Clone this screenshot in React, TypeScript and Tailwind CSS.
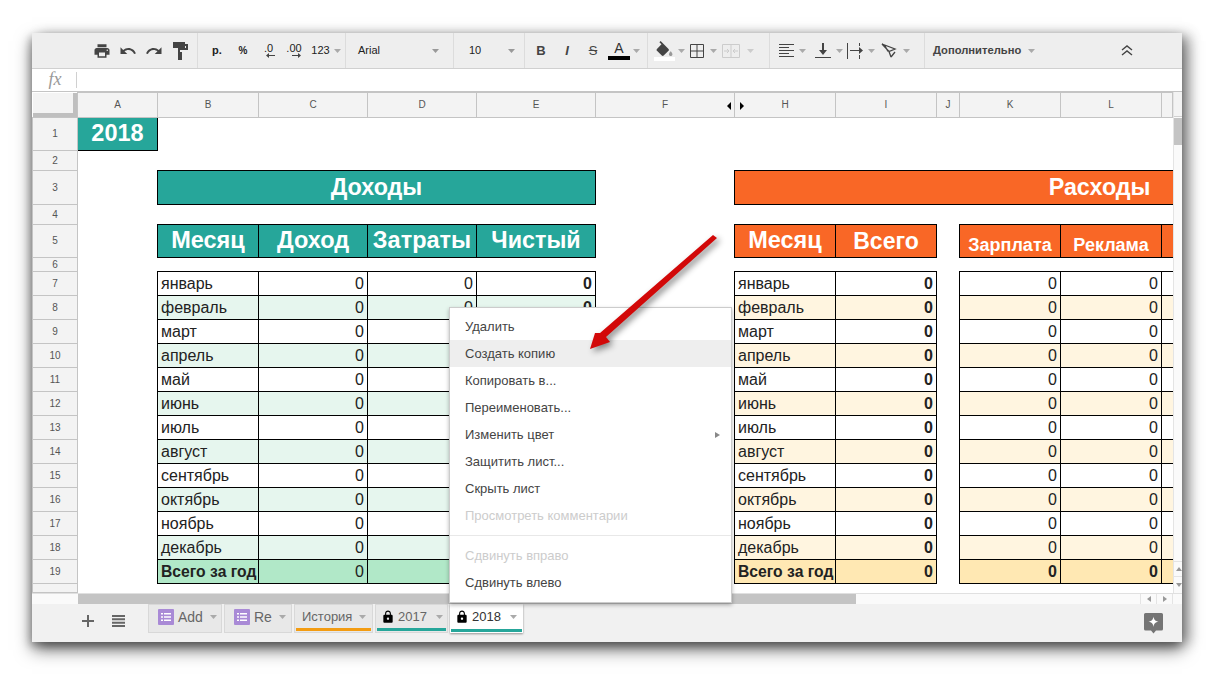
import React from "react";

const months = ["январь","февраль","март","апрель","май","июнь","июль","август","сентябрь","октябрь","ноябрь","декабрь"];
const colLetters = ["A","B","C","D","E","F","H","I","J","K","L",""];

function Caret({ className = "fill-[#888]" }: { className?: string }) {
  return (
    <svg width="7" height="4" viewBox="0 0 7 4" className={className}>
      <path d="M0 0h7L3.5 4z" />
    </svg>
  );
}

function Slot({ children, className = "w-[26px]" }: { children: React.ReactNode; className?: string }) {
  return <div className={`flex items-center justify-center shrink-0 ${className}`}>{children}</div>;
}

function Icon({ d, size = 16, className = "fill-[#444]" }: { d: string; size?: number; className?: string }) {
  return (
    <svg width={size} height={size} viewBox="0 0 24 24" className={className}>
      <path d={d} />
    </svg>
  );
}

function Toolbar() {
  const group = "flex items-center h-full border-r border-[#dcdcdc] shrink-0";
  return (
    <div className="h-[36px] shrink-0 flex items-center bg-[#eeeeee] border-b border-[#d0d0d0] text-[#333] text-[11px]">
      <div className={`${group} w-[166px] pl-[57px]`}>
        <Slot><Icon size={18} d="M19 8H5c-1.66 0-3 1.34-3 3v6h4v4h12v-4h4v-6c0-1.66-1.34-3-3-3zm-3 11H8v-5h8v5zm3-7c-.55 0-1-.45-1-1s.45-1 1-1 1 .45 1 1-.45 1-1 1zm-1-9H6v4h12V3z" /></Slot>
        <Slot><Icon size={18} d="M12.5 8c-2.65 0-5.05.99-6.9 2.6L2 7v9h9l-3.62-3.62c1.39-1.16 3.16-1.88 5.12-1.88 3.54 0 6.55 2.31 7.6 5.5l2.37-.78C21.08 11.03 17.15 8 12.5 8z" /></Slot>
        <Slot><Icon size={18} d="M18.4 10.6C16.55 8.99 14.15 8 11.5 8c-4.65 0-8.58 3.03-9.96 7.22L3.9 16c1.05-3.19 4.05-5.5 7.6-5.5 1.95 0 3.73.72 5.12 1.88L13 16h9V7l-3.6 3.6z" /></Slot>
        <Slot>
          <svg width="15" height="18" viewBox="0 0 15 18" className="fill-[#444]">
            <path d="M0 0h12v2h3v6H7v2h2v8H5v-8V6h8V4h-1v2H0z" />
          </svg>
        </Slot>
      </div>
      <div className={`${group} w-[148px] pl-[6px] text-[#222] text-[11px]`}>
        <Slot className="w-[26px]"><span className="font-bold">р.</span></Slot>
        <Slot className="w-[26px]"><span className="font-bold text-[10px]">%</span></Slot>
        <Slot className="w-[25px]">
          <div className="flex flex-col items-center">
            <span className="leading-[9px]">.0</span>
            <svg width="9" height="5" viewBox="0 0 9 5" className="ml-[4px] fill-[#444]"><path d="M9 2H3V0L0 2.500 3 5V3h6z" /></svg>
          </div>
        </Slot>
        <Slot className="w-[26px]">
          <div className="flex flex-col items-center">
            <span className="leading-[9px]">.00</span>
            <svg width="9" height="5" viewBox="0 0 9 5" className="ml-[6px] fill-[#444]"><path d="M0 2h6V0l3 2.500L6 5V3H0z" /></svg>
          </div>
        </Slot>
        <Slot className="w-[27px]"><span>123</span></Slot>
        <Caret className="fill-[#aaa]" />
      </div>
      <div className={`${group} w-[108px] pl-[12px] pr-[14px] justify-between`}>
        <span className="text-[#222] text-[11px]">Arial</span>
        <Caret className="fill-[#999]" />
      </div>
      <div className={`${group} w-[71px] pl-[15px] pr-[9px] justify-between`}>
        <span className="text-[#222] text-[11px]">10</span>
        <Caret className="fill-[#999]" />
      </div>
      <div className={`${group} w-[123px] pl-[3px]`}>
        <Slot><span className="font-bold text-[13px] text-[#444]">B</span></Slot>
        <Slot><span className="font-bold italic text-[13px] text-[#444]">I</span></Slot>
        <Slot><span className="line-through text-[13px] text-[#444]">S</span></Slot>
        <Slot>
          <div className="flex flex-col items-center w-[22px]">
            <span className="text-[14px] leading-[14px] text-[#333]">A</span>
            <div className="w-[22px] h-[4px] bg-black mt-[1px]" />
          </div>
        </Slot>
        <div className="ml-[1px]"><Caret className="fill-[#aaa]" /></div>
      </div>
      <div className={`${group} w-[122px] pl-[5px]`}>
        <div className="flex flex-col items-center w-[22px]">
          <svg width="19" height="15" viewBox="2 0 20 17" className="fill-[#444]">
            <path d="M16.56 8.94L7.62 0 6.210 1.410l2.380 2.380-5.150 5.150c-.59.59-.59 1.540 0 2.120l5.500 5.500c.29.29.68.44 1.060.44s.77-.15 1.060-.44l5.500-5.500c.59-.58.59-1.530 0-2.120z" />
            <path d="M19 11.500s-2 2.170-2 3.500c0 1.100.9 2 2 2s2-.9 2-2c0-1.330-2-3.500-2-3.500z" className="fill-[#999]" />
          </svg>
          <div className="w-[21px] h-[4px] bg-white mt-[1px]" />
        </div>
        <div className="ml-[3px]"><Caret className="fill-[#aaa]" /></div>
        <div className="ml-[5px]">
          <svg width="14" height="14" viewBox="0 0 14 14" fill="none" className="stroke-[#444]">
            <path d="M.5.5h13v13H.5zM7 .5v13M.5 7h13" />
          </svg>
        </div>
        <div className="ml-[6px]"><Caret className="fill-[#aaa]" /></div>
        <div className="ml-[5px]">
          <svg width="18" height="14" viewBox="0 0 18 14" fill="none" className="stroke-[#ccc]">
            <path d="M.5.5h17v13H.5zM9 .5v13M2 7h5M5 5l2 2-2 2M16 7h-5M13 5l-2 2 2 2" />
          </svg>
        </div>
        <div className="ml-[7px]"><Caret className="fill-[#ccc]" /></div>
      </div>
      <div className={`${group} w-[155px] pl-[9px]`}>
        <svg width="15" height="13" viewBox="0 0 15 13" className="fill-[#444]">
          <path d="M0 0h15v1H0zM0 3h10v1H0zM0 6h15v1H0zM0 9h10v1H0zM0 12h15v1H0z" />
        </svg>
        <div className="ml-[5px]"><Caret className="fill-[#aaa]" /></div>
        <div className="ml-[9px]">
          <svg width="16" height="15" viewBox="0 0 16 15" className="fill-[#444]">
            <path d="M7 0h2v7h3l-4 5-4-5h3zM0 14h16v1H0z" />
          </svg>
        </div>
        <div className="ml-[5px]"><Caret className="fill-[#aaa]" /></div>
        <div className="ml-[4px]">
          <svg width="18" height="16" viewBox="0 0 18 16" className="fill-[#444]">
            <path d="M0 0h1v16H0zM3 7h9V4l4 3.500-4 3.500V8H3zM12 0h1v3h-1zM12 12h1v4h-1z" />
          </svg>
        </div>
        <div className="ml-[3px]"><Caret className="fill-[#aaa]" /></div>
        <div className="ml-[6px]">
          <svg width="16" height="15" viewBox="0 0 16 15" fill="none" className="stroke-[#444]" strokeWidth="1.3">
            <path d="M1 1l13 5-6 2.500zM3.500 2L7 8.500M8 8.500L10 14M10 14l4-5" />
          </svg>
        </div>
        <div className="ml-[6px]"><Caret className="fill-[#aaa]" /></div>
      </div>
      <div className="flex items-center h-full flex-1 pl-[8px]">
        <span className="font-bold text-[#444] text-[11.2px]">Дополнительно</span>
        <div className="ml-[7px]"><Caret className="fill-[#aaa]" /></div>
        <div className="ml-[86px]">
          <svg width="12" height="11" viewBox="0 0 12 11" fill="none" className="stroke-[#444]" strokeWidth="1.4">
            <path d="M1 5l5-4 5 4M1 10l5-4 5 4" />
          </svg>
        </div>
      </div>
    </div>
  );
}

function FormulaBar() {
  return (
    <div className="h-[23px] shrink-0 flex items-center bg-white border-b border-[#c4c4c4]">
      <div className="w-[45px] h-[16px] flex items-center justify-center border-r border-[#d0d0d0] [font-family:Liberation_Serif,serif] italic text-[18px] text-[#999] leading-none">
        <span className="pl-[2px] -mt-[2px]">fx</span>
      </div>
    </div>
  );
}

const rowHead = "border border-[#c4c4c4] bg-[#f3f3f3] text-[10px] text-[#555] text-center font-normal p-0 leading-none";
const colHead = "border border-[#c4c4c4] bg-[#f3f3f3] text-[10px] text-[#555] text-center font-normal p-0 leading-none";
const teal = "border border-black bg-[#26a69a] text-white font-bold text-center p-0 leading-none";
const orange = "border border-black bg-[#f96726] text-white font-bold text-center p-0 leading-none";
const cell = "border border-black p-0 text-[16px] text-[#222] leading-none";

function Sheet() {
  return (
    <table className="table-fixed border-collapse w-[1140px] shrink-0">
      <colgroup>
        <col className="w-[45px]" /><col className="w-[80px]" /><col className="w-[101px]" /><col className="w-[109px]" />
        <col className="w-[109px]" /><col className="w-[119px]" /><col className="w-[139px]" /><col className="w-[101px]" />
        <col className="w-[101px]" /><col className="w-[23px]" /><col className="w-[101px]" /><col className="w-[101px]" />
        <col className="w-[11px]" />
      </colgroup>
      <thead>
        <tr className="h-[25px]">
          <th className="p-0 bg-[#f3f3f3]">
            <div className="h-[24px] w-full border-r-4 border-b-4 border-[#bfbfbf]" />
          </th>
          {colLetters.map((l, i) => (
            <th key={i} className={`${colHead} ${l === "F" || l === "H" ? "relative" : ""}`}>
              {l}
              {l === "F" && <span className="absolute right-[3px] top-[9px] w-0 h-0 border-y-[4px] border-y-transparent border-r-[4px] border-r-black" />}
              {l === "H" && <span className="absolute left-[5px] top-[9px] w-0 h-0 border-y-[4px] border-y-transparent border-l-[4px] border-l-black" />}
            </th>
          ))}
        </tr>
      </thead>
      <tbody>
        <tr className="h-[33px]">
          <td className={rowHead}>1</td>
          <td className="border-r border-b border-black bg-[#26a69a] text-white font-bold text-[23.5px] text-center p-0 leading-none">2018</td>
        </tr>
        <tr className="h-[20px]"><td className={rowHead}>2</td></tr>
        <tr className="h-[34px]">
          <td className={rowHead}>3</td>
          <td />
          <td colSpan={4} className={`${teal} text-[23.3px]`}>Доходы</td>
          <td />
          <td colSpan={6} className={`${orange} border-r-0 text-[23.3px] !text-right pr-[22px]`}>Расходы</td>
        </tr>
        <tr className="h-[20px]"><td className={rowHead}>4</td></tr>
        <tr className="h-[33px]">
          <td className={rowHead}>5</td>
          <td />
          <td className={`${teal} text-[23.5px]`}>Месяц</td>
          <td className={`${teal} text-[23.5px]`}>Доход</td>
          <td className={`${teal} text-[23.5px]`}>Затраты</td>
          <td className={`${teal} text-[23.3px]`}>Чистый</td>
          <td />
          <td className={`${orange} text-[23.5px]`}>Месяц</td>
          <td className={`${orange} text-[23px]`}>Всего</td>
          <td />
          <td className={`${orange} text-[18px] align-bottom pb-[3px]`}>Зарплата</td>
          <td className={`${orange} text-[18px] align-bottom pb-[3px]`}>Реклама</td>
          <td className={`${orange} border-r-0`} />
        </tr>
        <tr className="h-[14px]"><td className={rowHead}>6</td></tr>
        {months.map((m, i) => {
          const lBg = i % 2 === 1 ? "bg-[#e6f6ee]" : "bg-white";
          const rBg = i % 2 === 1 ? "bg-[#fff5e0]" : "bg-white";
          return (
            <tr key={m} className="h-[24px]">
              <td className={rowHead}>{i + 7}</td>
              <td />
              <td className={`${cell} ${lBg} pl-[3px]`}>{m}</td>
              <td className={`${cell} ${lBg} text-right pr-[3px]`}>0</td>
              <td className={`${cell} ${lBg} text-right pr-[3px]`}>0</td>
              <td className={`${cell} ${lBg} text-right pr-[3px] font-bold`}>0</td>
              <td />
              <td className={`${cell} ${rBg} pl-[3px]`}>{m}</td>
              <td className={`${cell} ${rBg} text-right pr-[3px] font-bold`}>0</td>
              <td />
              <td className={`${cell} ${rBg} text-right pr-[3px]`}>0</td>
              <td className={`${cell} ${rBg} text-right pr-[3px]`}>0</td>
              <td className={`${cell} ${rBg} border-r-0`} />
            </tr>
          );
        })}
        <tr className="h-[24px]">
          <td className={rowHead}>19</td>
          <td />
          <td className={`${cell} bg-[#b1e8c8] pl-[3px] font-bold whitespace-nowrap !text-[15.7px]`}>Всего за год</td>
          <td className={`${cell} bg-[#b1e8c8] text-right pr-[3px]`}>0</td>
          <td className={`${cell} bg-[#b1e8c8] text-right pr-[3px]`}>0</td>
          <td className={`${cell} bg-[#b1e8c8] text-right pr-[3px] font-bold`}>0</td>
          <td />
          <td className={`${cell} bg-[#ffe8b3] pl-[3px] font-bold whitespace-nowrap !text-[15.7px]`}>Всего за год</td>
          <td className={`${cell} bg-[#ffe8b3] text-right pr-[3px] font-bold`}>0</td>
          <td />
          <td className={`${cell} bg-[#ffe8b3] text-right pr-[3px] font-bold`}>0</td>
          <td className={`${cell} bg-[#ffe8b3] text-right pr-[3px] font-bold`}>0</td>
          <td className={`${cell} bg-[#ffe8b3] border-r-0`} />
        </tr>
        <tr className="h-[9px]"><td className={rowHead} /></tr>
      </tbody>
    </table>
  );
}

function VScroll() {
  return (
    <div className="w-[10px] flex-1 bg-[#fafafa] border-l border-[#e4e4e4] flex flex-col">
      <div className="h-[25px] shrink-0 bg-[#f3f3f3] border-b border-[#d0d0d0]" />
      <div className="h-[27px] w-[9px] shrink-0 ml-auto mt-px bg-[#c4c4c4]" />
      <div className="flex-1" />
      <div className="h-[16px] flex items-center justify-center border-y border-[#e4e4e4]">
        <svg width="6" height="4" viewBox="0 0 6 4" className="fill-[#999]"><path d="M3 0l3 4H0z" /></svg>
      </div>
      <div className="h-[16px] flex items-center justify-center">
        <svg width="6" height="4" viewBox="0 0 6 4" className="fill-[#999]"><path d="M0 0h6L3 4z" /></svg>
      </div>
    </div>
  );
}

function HScroll() {
  return (
    <div className="h-[11px] shrink-0 flex bg-[#fafafa] border-t border-[#e0e0e0]">
      <div className="w-[46px] shrink-0" />
      <div className="w-[778px] shrink-0 bg-[#c4c4c4]" />
      <div className="flex-1" />
      <div className="w-[16px] flex items-center justify-center border-l border-[#e4e4e4]">
        <svg width="4" height="6" viewBox="0 0 4 6" className="fill-[#999]"><path d="M4 0v6L0 3z" /></svg>
      </div>
      <div className="w-[16px] flex items-center justify-center border-l border-[#e4e4e4]">
        <svg width="4" height="6" viewBox="0 0 4 6" className="fill-[#999]"><path d="M0 0v6l4-3z" /></svg>
      </div>
      <div className="w-[10px] border-l border-[#e4e4e4]" />
    </div>
  );
}

const lockPath = "M18 8h-1V6c0-2.760-2.240-5-5-5S7 3.240 7 6v2H6c-1.100 0-2 .9-2 2v10c0 1.100.9 2 2 2h12c1.100 0 2-.9 2-2V10c0-1.100-.9-2-2-2zm-6 9c-1.100 0-2-.9-2-2s.9-2 2-2 2 .9 2 2-.9 2-2 2zm3.100-9H8.900V6c0-1.710 1.390-3.100 3.100-3.100s3.100 1.390 3.100 3.100v2z";

function ListIcon() {
  return (
    <svg width="16" height="16" viewBox="0 0 16 16" className="shrink-0">
      <rect width="16" height="16" rx="1" className="fill-[#a98ad6]" />
      <path d="M3 4h2v1.500H3zM6 4h7v1.500H6zM3 7.200h2v1.500H3zM6 7.200h7v1.500H6zM3 10.500h2V12H3zM6 10.500h7V12H6z" className="fill-white" />
    </svg>
  );
}

function Tab({ w, children, bar, active }: { w: string; children: React.ReactNode; bar?: string; active?: boolean }) {
  return (
    <div className={`${w} h-[29px] shrink-0 relative flex items-center gap-[4px] pb-[3px] ${active ? "bg-white text-[#333] shadow-[0_1px_2px_rgba(0,0,0,0.4)]" : "bg-[#e8e8e8] text-[#666] border border-[#d8d8d8]"}`}>
      {children}
      {bar && <div className={`absolute left-[1px] right-[1px] bottom-[1px] h-[3px] ${bar}`} />}
    </div>
  );
}

function TabBar() {
  return (
    <div className="flex-1 flex bg-[#f1f1f1] relative">
      <div className="w-[116px] shrink-0 flex items-center h-[33px] pl-[50px] pt-[1px] gap-[18px]">
        <svg width="12" height="12" viewBox="0 0 12 12" className="fill-[#666]"><path d="M5 0h2v5h5v2H7v5H5V7H0V5h5z" /></svg>
        <svg width="13" height="12" viewBox="0 0 13 12" className="fill-[#666]"><path d="M0 0h13v2H0zM0 3.300h13v2H0zM0 6.700h13v2H0zM0 10h13v2H0z" /></svg>
      </div>
      <div className="flex gap-[2px]">
        <Tab w="w-[74px] pl-[9px]"><ListIcon /><span className="whitespace-nowrap text-[14px]">Add</span><Caret className="fill-[#aaa] ml-[3px]" /></Tab>
        <Tab w="w-[68px] pl-[9px]"><ListIcon /><span className="whitespace-nowrap text-[14px]">Re</span><Caret className="fill-[#aaa] ml-[3px]" /></Tab>
        <Tab w="w-[79px] pl-[7px]" bar="bg-[#f39c12]"><span className="whitespace-nowrap text-[13px]">История</span><Caret className="fill-[#aaa] ml-[3px]" /></Tab>
        <Tab w="w-[73px] pl-[7px]" bar="bg-[#26a69a]"><Icon size={14} className="fill-black -ml-[2px]" d={lockPath} /><span className="text-[13px] -ml-[1px]">2017</span><Caret className="fill-[#aaa] ml-[5px]" /></Tab>
        <Tab w="w-[73px] pl-[7px]" bar="bg-[#26a69a]" active><Icon size={14} className="fill-black -ml-[2px]" d={lockPath} /><span className="text-[13px] -ml-[1px]">2018</span><Caret className="fill-[#aaa] ml-[5px]" /></Tab>
      </div>
      <div className="flex-1" />
      <div className="mr-[19px] mt-[9px]">
        <svg width="19" height="21" viewBox="0 0 19 21">
          <path d="M1.500 0h16A1.500 1.500 0 0 1 19 1.500V16a1.500 1.500 0 0 1-1.500 1.500H12L9.500 20.500 7 17.500H1.500A1.500 1.500 0 0 1 0 16V1.500A1.500 1.500 0 0 1 1.500 0z" className="fill-[#757575]" />
          <path d="M9.500 3.500c.5 3.300 1.700 4.600 5 5.200-3.300.6-4.500 1.900-5 5.200-.5-3.300-1.700-4.600-5-5.200 3.300-.6 4.500-1.900 5-5.200z" className="fill-white" />
        </svg>
      </div>
    </div>
  );
}

function MenuItem({ children, disabled, active, sub }: { children: React.ReactNode; disabled?: boolean; active?: boolean; sub?: boolean }) {
  return (
    <div className={`h-[27px] flex items-center justify-between pl-[15px] pr-[11px] ${disabled ? "text-[#ccc]" : "text-[#444]"} ${active ? "bg-[#eeeeee]" : ""}`}>
      <span>{children}</span>
      {sub && <span className="w-0 h-0 border-y-[3px] border-y-transparent border-l-[5px] border-l-[#888]" />}
    </div>
  );
}

function Menu() {
  return (
    <div className="absolute left-[417px] top-[274px] w-[283px] h-[296px] z-10 bg-white border border-[#ccc] shadow-[0_2px_4px_rgba(0,0,0,0.3)] pt-[5px] text-[13px]">
      <MenuItem>Удалить</MenuItem>
      <MenuItem active>Создать копию</MenuItem>
      <MenuItem>Копировать в...</MenuItem>
      <MenuItem>Переименовать...</MenuItem>
      <MenuItem sub>Изменить цвет</MenuItem>
      <MenuItem>Защитить лист...</MenuItem>
      <MenuItem>Скрыть лист</MenuItem>
      <MenuItem disabled>Просмотреть комментарии</MenuItem>
      <div className="h-px bg-[#e8e8e8] my-[6px]" />
      <MenuItem disabled>Сдвинуть вправо</MenuItem>
      <MenuItem>Сдвинуть влево</MenuItem>
    </div>
  );
}

function Arrow() {
  return (
    <svg
      width="150"
      height="140"
      viewBox="0 0 150 140"
      className="absolute left-[548px] top-[192px] z-20 drop-shadow-[3px_3px_3px_rgba(0,0,0,0.45)]"
    >
      <defs>
        <linearGradient id="arr" x1="0" y1="0" x2="1" y2="1">
          <stop offset="0" stopColor="#e01010" />
          <stop offset="1" stopColor="#c40000" />
        </linearGradient>
      </defs>
      <path d="M133 10 L137 13 L26 112 L30 117 L10 124 L15 108 L20 108 Z" fill="url(#arr)" />
    </svg>
  );
}

export default function App() {
  return (
    <div className="w-[1214px] h-[675px] bg-white overflow-hidden pt-[33px] pl-[32px] [font-family:Liberation_Sans,Arial,sans-serif]">
      <div className="relative w-[1150px] h-[609px] flex flex-col bg-white shadow-[0_8px_16px_rgba(0,0,0,0.5),8px_2px_12px_rgba(0,0,0,0.3),-2px_4px_8px_rgba(0,0,0,0.25)]">
        <Toolbar />
        <FormulaBar />
        <div className="h-[501px] shrink-0 flex overflow-hidden">
          <Sheet />
          <VScroll />
        </div>
        <HScroll />
        <TabBar />
        <Menu />
        <Arrow />
      </div>
    </div>
  );
}
